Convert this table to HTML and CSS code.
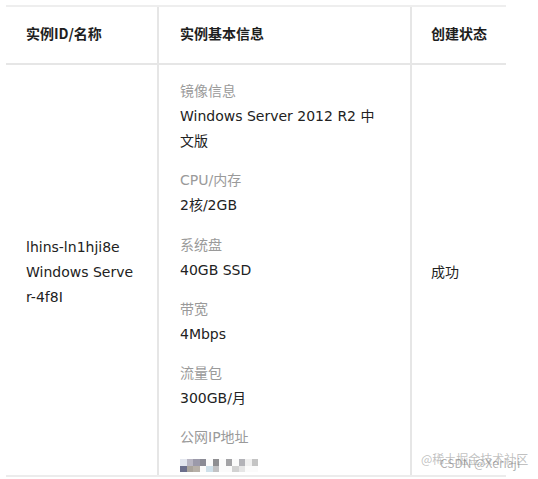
FILE: index.html
```html
<!DOCTYPE html>
<html lang="zh">
<head>
<meta charset="utf-8">
<title>实例</title>
<link rel="stylesheet" href="styles.css">
</head>
<body>
<div class="table">
  <div class="row head">
    <div class="cell c1">实例ID/名称</div>
    <div class="cell c2">实例基本信息</div>
    <div class="cell c3">创建状态</div>
  </div>
  <div class="row body">
    <div class="cell c1 mid">
      <div class="name">lhins-ln1hji8e</div>
      <div class="name">Windows Server-4f8I</div>
    </div>
    <div class="cell c2 info">
      <div class="group"><div class="label">镜像信息</div><div class="value">Windows Server 2012 R2 中文版</div></div>
      <div class="group"><div class="label">CPU/内存</div><div class="value">2核/2GB</div></div>
      <div class="group"><div class="label">系统盘</div><div class="value">40GB SSD</div></div>
      <div class="group"><div class="label">带宽</div><div class="value">4Mbps</div></div>
      <div class="group"><div class="label">流量包</div><div class="value">300GB/月</div></div>
      <div class="group"><div class="label">公网IP地址</div>
        <div class="value mosaic">
          <span class="px p1"></span><span class="px p2"></span><span class="px p3"></span><span class="px p4"></span><span class="px p0"></span><span class="px p5"></span><span class="px p0"></span><span class="px p6"></span><span class="px p0"></span><span class="px p7"></span><span class="px p8"></span><span class="px p9"></span>
          <span class="px q1"></span><span class="px q2"></span><span class="px q3"></span><span class="px p0"></span><span class="px q4"></span><span class="px q5"></span><span class="px p0"></span><span class="px p0"></span><span class="px q6"></span><span class="px q7"></span><span class="px p0"></span><span class="px p0"></span>
        </div>
      </div>
    </div>
    <div class="cell c3 mid">成功</div>
  </div>
</div>
<div class="watermark">
  <span class="wm1">@稀土掘金技术社区</span>
  <span class="wm2">CSDN @Xeriaji</span>
</div>
</body>
</html>
```

FILE: styles.css
```css
html, body {
  margin: 0;
  padding: 0;
  background: #fff;
}
body {
  width: 538px;
  height: 479px;
  overflow: hidden;
  position: relative;
  font-family: "DejaVu Sans", Verdana, "Noto Sans CJK SC", sans-serif;
  font-size: 14px;
  color: #222;
}
.table {
  margin: 5px 0 0 6px;
  width: 500px;
  border-top: 2px solid #eeeeee;
}
.row {
  display: grid;
  grid-template-columns: 151px 253px 96px;
}
.head {
  height: 56px;
  border-bottom: 2px solid #e6e6e6;
  font-family: "Noto Sans CJK SC", sans-serif;
  font-weight: 700;
  color: #1e1e1e;
}
.head .cell {
  display: flex;
  align-items: center;
  padding-bottom: 4px;
}
.cell {
  box-sizing: border-box;
}
.c1 { padding-left: 20px; padding-right: 22px; }
.c2 { padding-left: 21px; border-left: 2px solid #e6e6e6; }
.c3 { padding-left: 19px; border-left: 2px solid #e6e6e6; }
.body {
  height: 410px;
  border-bottom: 2px solid #ececec;
  overflow: hidden;
}
.mid {
  display: flex;
  flex-direction: column;
  justify-content: center;
  line-height: 25px;
  padding-bottom: 6px;
}
.name {
  word-break: break-all;
}
.info {
  padding-top: 14px;
  line-height: 25px;
  padding-right: 26px;
}
.group {
  margin-bottom: 14.3px;
}
.label {
  color: #9a9a9a;
}
.value {
  color: #222;
}
.mosaic {
  display: grid;
  grid-template-columns: repeat(12, 6.5px);
  grid-auto-rows: 6.5px;
  padding-top: 9px;
  width: 78px;
}
.px { display: block; }
.p0 { background: #fbfbfb; }
.p1 { background: #e3e6ee; }
.p2 { background: #b9b6c3; }
.p3 { background: #9c9aaa; }
.p4 { background: #8b8b95; }
.p5 { background: #8f8f92; }
.p6 { background: #a3a3a6; }
.p7 { background: #b3b3b8; }
.p8 { background: #f0f0f0; }
.p9 { background: #c4c4c4; }
.q1 { background: #6c6f8c; }
.q2 { background: #aaa49c; }
.q3 { background: #b7b0a8; }
.q4 { background: #cfe0ea; }
.q5 { background: #c2c2c4; }
.q6 { background: #d2d2d2; }
.q7 { background: #e6e6e6; }
.watermark {
  position: absolute;
  left: 421px;
  top: 450px;
  width: 115px;
  height: 22px;
  font-family: "Noto Sans CJK SC", sans-serif;
  font-size: 12px;
  color: rgba(140, 140, 140, 0.55);
}
.wm1 {
  position: absolute;
  left: 0;
  top: 0;
  white-space: nowrap;
}
.wm2 {
  position: absolute;
  left: 19px;
  top: 4px;
  white-space: nowrap;
  color: rgba(110, 110, 110, 0.55);
}
```
